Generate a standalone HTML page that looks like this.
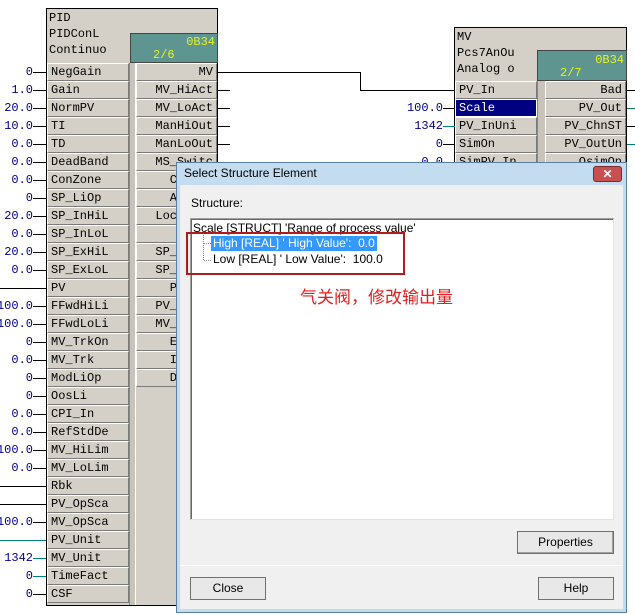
<!DOCTYPE html><html><head><meta charset="utf-8"><style>
body{margin:0;width:635px;height:615px;background:#fff;position:relative;overflow:hidden;font-family:"Liberation Mono",monospace;font-size:12px}
div{position:absolute;box-sizing:border-box}
.blk{background:#d4d0c8;border:1px solid #000}
.c{background:#d4d0c8;border:1px solid #7a7a7a;border-top-color:#fff;border-left-color:#fff;height:18px;line-height:16px;padding:0 3px;white-space:nowrap;overflow:hidden;color:#000}
.r{text-align:right}
.v{color:#00008b;text-align:right;width:40px;height:18px;line-height:18px}
.ln{height:1px;background:#000}
.hd{line-height:16px;left:3px}
.teal{background:#5f9590;border:1px solid #444;color:#e6f21c}
.ui{font-family:"Liberation Sans",sans-serif;font-size:12px;color:#000}
.btn{background:#e8e8e8;border:1px solid #707070;text-align:center;line-height:21px;font-family:"Liberation Sans",sans-serif;font-size:12px}
</style></head><body>
<!-- PID block -->
<div class="blk" style="left:46px;top:8px;width:172px;height:598px"></div>
<div class="hd" style="left:49px;top:10px">PID</div>
<div class="hd" style="left:49px;top:26px">PIDConL</div>
<div class="hd" style="left:49px;top:42px">Continuo</div>
<div class="teal" style="left:130px;top:33px;width:88px;height:30px"><div style="right:2px;top:1px">0B34</div><div style="left:22px;top:14px">2/6</div></div>
<div style="left:129px;top:63px;width:7px;height:542px;background:#c8c4bc;border-left:1px solid #888;border-right:1px solid #fff"></div>
<!-- inputs -->
<div class="c" style="left:47px;top:63px;width:82px">NegGain</div>
<div class="c" style="left:47px;top:81px;width:82px">Gain</div>
<div class="c" style="left:47px;top:99px;width:82px">NormPV</div>
<div class="c" style="left:47px;top:117px;width:82px">TI</div>
<div class="c" style="left:47px;top:135px;width:82px">TD</div>
<div class="c" style="left:47px;top:153px;width:82px">DeadBand</div>
<div class="c" style="left:47px;top:171px;width:82px">ConZone</div>
<div class="c" style="left:47px;top:189px;width:82px">SP_LiOp</div>
<div class="c" style="left:47px;top:207px;width:82px">SP_InHiL</div>
<div class="c" style="left:47px;top:225px;width:82px">SP_InLoL</div>
<div class="c" style="left:47px;top:243px;width:82px">SP_ExHiL</div>
<div class="c" style="left:47px;top:261px;width:82px">SP_ExLoL</div>
<div class="c" style="left:47px;top:279px;width:82px">PV</div>
<div class="c" style="left:47px;top:297px;width:82px">FFwdHiLi</div>
<div class="c" style="left:47px;top:315px;width:82px">FFwdLoLi</div>
<div class="c" style="left:47px;top:333px;width:82px">MV_TrkOn</div>
<div class="c" style="left:47px;top:351px;width:82px">MV_Trk</div>
<div class="c" style="left:47px;top:369px;width:82px">ModLiOp</div>
<div class="c" style="left:47px;top:387px;width:82px">OosLi</div>
<div class="c" style="left:47px;top:405px;width:82px">CPI_In</div>
<div class="c" style="left:47px;top:423px;width:82px">RefStdDe</div>
<div class="c" style="left:47px;top:441px;width:82px">MV_HiLim</div>
<div class="c" style="left:47px;top:459px;width:82px">MV_LoLim</div>
<div class="c" style="left:47px;top:477px;width:82px">Rbk</div>
<div class="c" style="left:47px;top:495px;width:82px">PV_OpSca</div>
<div class="c" style="left:47px;top:513px;width:82px">MV_OpSca</div>
<div class="c" style="left:47px;top:531px;width:82px">PV_Unit</div>
<div class="c" style="left:47px;top:549px;width:82px">MV_Unit</div>
<div class="c" style="left:47px;top:567px;width:82px">TimeFact</div>
<div class="c" style="left:47px;top:585px;width:82px">CSF</div>
<!-- values -->
<div class="v" style="left:-7px;top:63px">0</div><div class="v" style="left:-7px;top:81px">1.0</div><div class="v" style="left:-7px;top:99px">20.0</div><div class="v" style="left:-7px;top:117px">10.0</div><div class="v" style="left:-7px;top:135px">0.0</div><div class="v" style="left:-7px;top:153px">0.0</div><div class="v" style="left:-7px;top:171px">0.0</div><div class="v" style="left:-7px;top:189px">0</div><div class="v" style="left:-7px;top:207px">20.0</div><div class="v" style="left:-7px;top:225px">0.0</div><div class="v" style="left:-7px;top:243px">20.0</div><div class="v" style="left:-7px;top:261px">0.0</div>
<div class="v" style="left:-7px;top:297px">100.0</div><div class="v" style="left:-7px;top:315px">100.0</div><div class="v" style="left:-7px;top:333px">0</div><div class="v" style="left:-7px;top:351px">0.0</div><div class="v" style="left:-7px;top:369px">0</div><div class="v" style="left:-7px;top:387px">0</div><div class="v" style="left:-7px;top:405px">0.0</div><div class="v" style="left:-7px;top:423px">0.0</div><div class="v" style="left:-7px;top:441px">100.0</div><div class="v" style="left:-7px;top:459px">0.0</div><div class="v" style="left:-7px;top:513px">100.0</div><div class="v" style="left:-7px;top:549px">1342</div><div class="v" style="left:-7px;top:567px">0</div><div class="v" style="left:-7px;top:585px">0</div>
<!-- pin lines -->
<div class="ln" style="left:33px;top:72px;width:13px"></div><div class="ln" style="left:33px;top:90px;width:13px"></div><div class="ln" style="left:33px;top:108px;width:13px"></div><div class="ln" style="left:33px;top:126px;width:13px"></div><div class="ln" style="left:33px;top:144px;width:13px"></div><div class="ln" style="left:33px;top:162px;width:13px"></div><div class="ln" style="left:33px;top:180px;width:13px"></div><div class="ln" style="left:33px;top:198px;width:13px"></div><div class="ln" style="left:33px;top:216px;width:13px"></div><div class="ln" style="left:33px;top:234px;width:13px"></div><div class="ln" style="left:33px;top:252px;width:13px"></div><div class="ln" style="left:33px;top:270px;width:13px"></div><div class="ln" style="left:0;top:288px;width:46px"></div><div class="ln" style="left:33px;top:306px;width:13px"></div><div class="ln" style="left:33px;top:324px;width:13px"></div><div class="ln" style="left:33px;top:342px;width:13px"></div><div class="ln" style="left:33px;top:360px;width:13px"></div><div class="ln" style="left:33px;top:378px;width:13px"></div><div class="ln" style="left:33px;top:396px;width:13px"></div><div class="ln" style="left:33px;top:414px;width:13px"></div><div class="ln" style="left:33px;top:432px;width:13px"></div><div class="ln" style="left:33px;top:450px;width:13px"></div><div class="ln" style="left:33px;top:468px;width:13px"></div><div class="ln" style="left:0;top:486px;width:46px"></div><div class="ln" style="left:0;top:504px;width:46px"></div><div class="ln" style="left:33px;top:522px;width:13px"></div><div class="ln" style="left:0;top:540px;width:46px;background:#008080"></div><div class="ln" style="left:33px;top:558px;width:13px;background:#008080"></div><div class="ln" style="left:33px;top:576px;width:13px;background:#008080"></div><div class="ln" style="left:33px;top:594px;width:13px"></div>
<!-- outputs -->
<div class="c r" style="left:136px;top:63px;width:81px">MV</div>
<div class="c r" style="left:136px;top:81px;width:81px">MV_HiAct</div>
<div class="c r" style="left:136px;top:99px;width:81px">MV_LoAct</div>
<div class="c r" style="left:136px;top:117px;width:81px">ManHiOut</div>
<div class="c r" style="left:136px;top:135px;width:81px">ManLoOut</div>
<div class="c r" style="left:136px;top:153px;width:81px">MS_Switc</div>
<div class="c r" style="left:136px;top:171px;width:81px">CasOut</div>
<div class="c r" style="left:136px;top:189px;width:81px">AutAct</div>
<div class="c r" style="left:136px;top:207px;width:81px">LocalAct</div>
<div class="c r" style="left:136px;top:225px;width:81px"></div>
<div class="c r" style="left:136px;top:243px;width:81px">SP_HiOut</div>
<div class="c r" style="left:136px;top:261px;width:81px">SP_LoOut</div>
<div class="c r" style="left:136px;top:279px;width:81px">PV_Out</div>
<div class="c r" style="left:136px;top:297px;width:81px">PV_OutUn</div>
<div class="c r" style="left:136px;top:315px;width:81px">MV_OutUn</div>
<div class="c r" style="left:136px;top:333px;width:81px">ErrOut</div>
<div class="c r" style="left:136px;top:351px;width:81px">IntOut</div>
<div class="c r" style="left:136px;top:369px;width:81px">DifOut</div>
<div class="ln" style="left:218px;top:72px;width:142px"></div>
<div style="left:360px;top:72px;width:1px;height:18px;background:#000"></div>
<div class="ln" style="left:360px;top:90px;width:95px"></div>
<div class="ln" style="left:218px;top:90px;width:12px"></div><div class="ln" style="left:218px;top:108px;width:12px"></div><div class="ln" style="left:218px;top:126px;width:12px"></div><div class="ln" style="left:218px;top:144px;width:12px"></div>
<!-- MV block -->
<div class="blk" style="left:454px;top:27px;width:173px;height:160px"></div>
<div class="hd" style="left:457px;top:29px">MV</div>
<div class="hd" style="left:457px;top:45px">Pcs7AnOu</div>
<div class="hd" style="left:457px;top:61px">Analog o</div>
<div class="teal" style="left:537px;top:50px;width:90px;height:31px"><div style="right:2px;top:2px">0B34</div><div style="left:22px;top:15px">2/7</div></div>
<div style="left:537px;top:81px;width:8px;height:90px;background:#c8c4bc;border-left:1px solid #888"></div>
<div class="c" style="left:455px;top:81px;width:82px">PV_In</div>
<div class="c" style="left:455px;top:99px;width:82px;background:#000080;color:#fff;border:1px solid #fff">Scale</div>
<div class="c" style="left:455px;top:117px;width:82px">PV_InUni</div>
<div class="c" style="left:455px;top:135px;width:82px">SimOn</div>
<div class="c" style="left:455px;top:153px;width:82px">SimPV_In</div>
<div class="c r" style="left:545px;top:81px;width:81px">Bad</div>
<div class="c r" style="left:545px;top:99px;width:81px">PV_Out</div>
<div class="c r" style="left:545px;top:117px;width:81px">PV_ChnST</div>
<div class="c r" style="left:545px;top:135px;width:81px">PV_OutUn</div>
<div class="c r" style="left:545px;top:153px;width:81px">QsimOn</div>
<div class="v" style="left:403px;top:99px">100.0</div><div class="v" style="left:403px;top:117px">1342</div><div class="v" style="left:403px;top:135px">0</div><div class="v" style="left:403px;top:153px">0.0</div>
<div class="ln" style="left:443px;top:108px;width:12px"></div><div class="ln" style="left:443px;top:126px;width:12px;background:#008080"></div><div class="ln" style="left:443px;top:144px;width:12px"></div>
<div class="ln" style="left:627px;top:90px;width:8px"></div><div class="ln" style="left:627px;top:108px;width:8px;background:#008040"></div><div class="ln" style="left:627px;top:126px;width:8px"></div><div class="ln" style="left:627px;top:144px;width:8px;background:#008080"></div>
<!-- dialog -->
<div style="left:176px;top:162px;width:451px;height:451px;background:#f0f0f0;border:1px solid #5a7fa0;box-shadow:inset 0 0 0 3px #c4dcef"></div>
<div style="left:177px;top:163px;width:449px;height:22px;background:#c4dcef"></div>
<div class="ui" style="left:184px;top:166px;font-size:12px">Select Structure Element</div>
<div style="left:593px;top:166px;width:29px;height:16px;background:#c75050;border:1px solid #7a2a2a;border-radius:3px;color:#fff;text-align:center;line-height:14px;font-family:'Liberation Sans',sans-serif;font-weight:bold;font-size:12px">✕</div>
<div style="left:180px;top:185px;width:443px;height:424px;background:#f0f0f0"></div>
<div class="ui" style="left:191px;top:196px">Structure:</div>
<div style="left:190px;top:218px;width:424px;height:302px;background:#fff;border:1px solid #a0a0a0;border-right-color:#e3e3e3;border-bottom-color:#e3e3e3;box-shadow:inset 1px 1px 0 #696969"></div>
<div class="ui" style="left:193px;top:221px">Scale [STRUCT] 'Range of process value'</div>
<div style="left:203px;top:235px;width:1px;height:25px;border-left:1px dotted #888"></div>
<div style="left:204px;top:243px;width:7px;border-top:1px dotted #888"></div>
<div style="left:204px;top:260px;width:7px;border-top:1px dotted #888"></div>
<div class="ui" style="left:211px;top:236px;background:#3399ff;color:#fff;padding:0 2px;height:15px;line-height:15px">High [REAL] ' High Value':&nbsp; 0.0</div>
<div class="ui" style="left:213px;top:252px;line-height:15px">Low [REAL] ' Low Value':&nbsp; 100.0</div>
<div style="left:186px;top:232px;width:219px;height:43px;border:2px solid #b01c1c"></div>
<div style="left:300px;top:283px;color:#e02020;font-family:'Liberation Sans','Noto Sans CJK SC',sans-serif;font-size:17px">气关阀，修改输出量</div>
<div class="btn" style="left:517px;top:531px;width:97px;height:23px;border-color:#707070;box-shadow:inset -1px -1px 0 #a0a0a0">Properties</div>
<div style="left:180px;top:565px;width:443px;height:1px;background:#a0a0a0;border-bottom:1px solid #fff"></div>
<div class="btn" style="left:190px;top:577px;width:76px;height:23px">Close</div>
<div class="btn" style="left:538px;top:577px;width:76px;height:23px">Help</div>
</body></html>
